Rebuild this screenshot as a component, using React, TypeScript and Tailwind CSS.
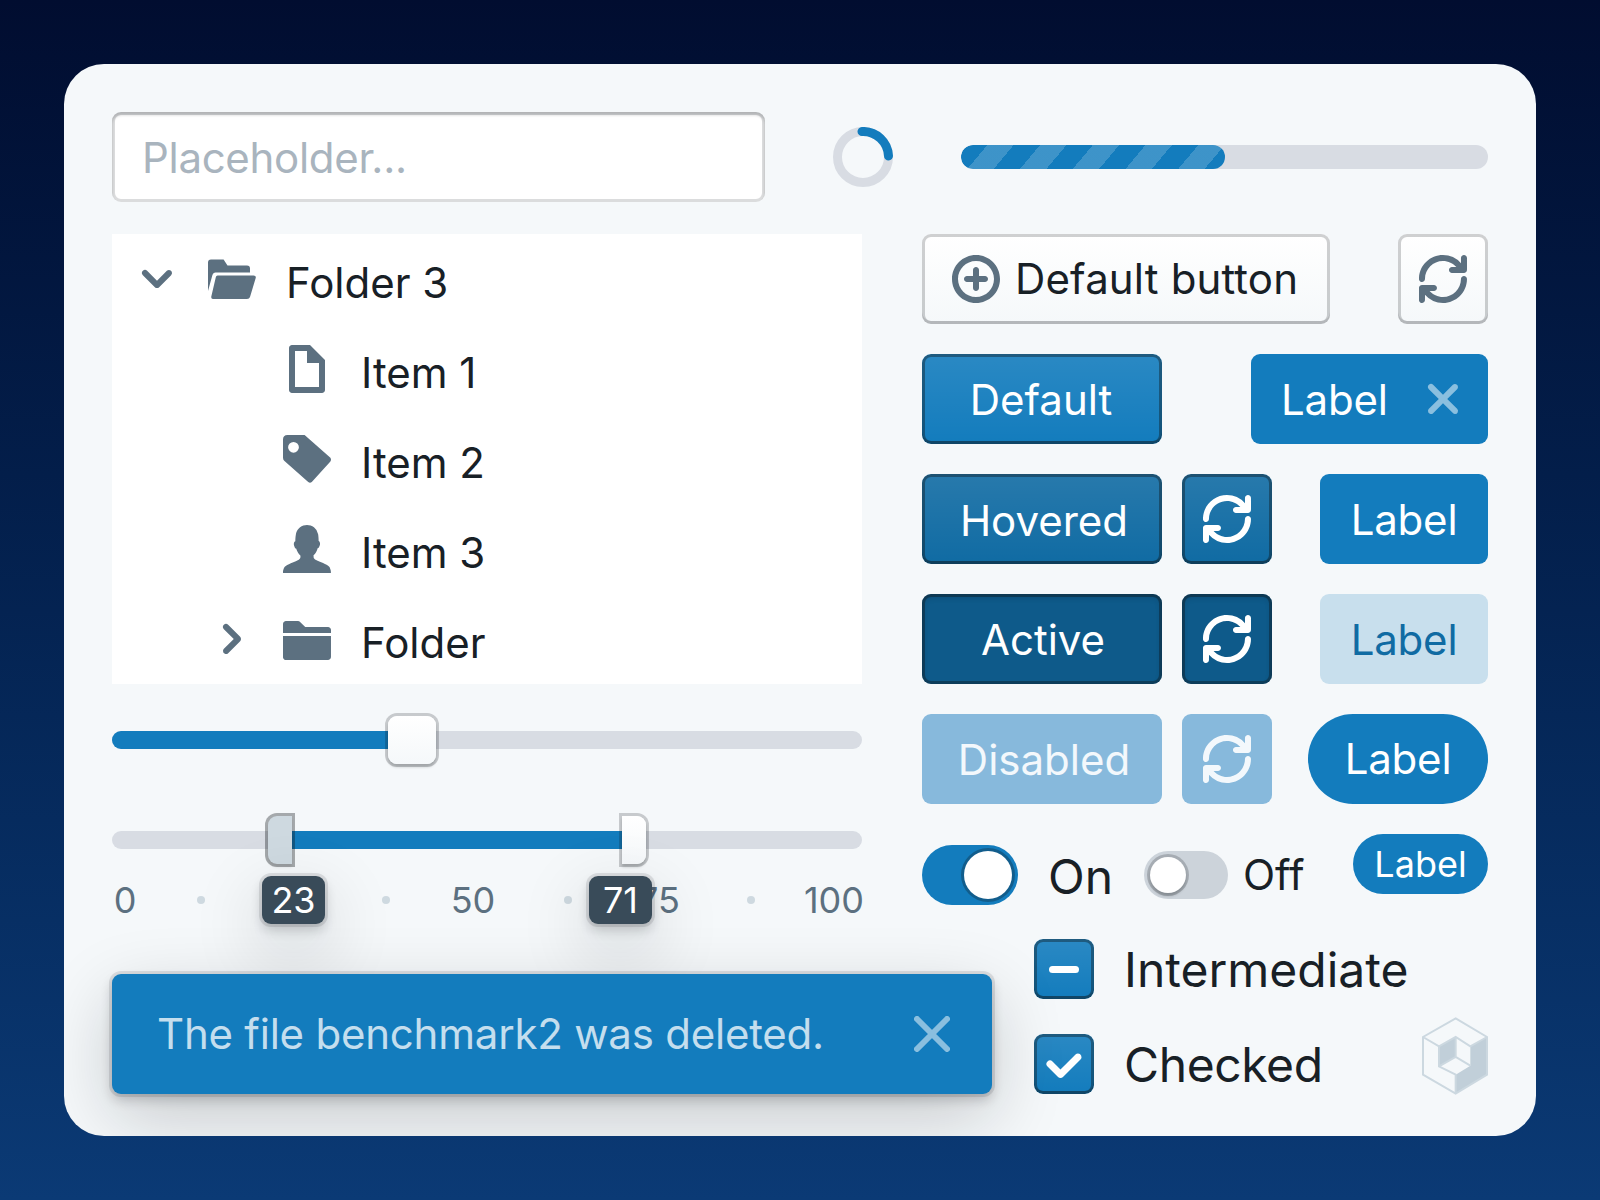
const refreshPath = "M14.99 6.99c-.55 0-1 .45-1 1 0 3.31-2.69 6-6 6-1.77 0-3.36-.78-4.46-2h1.46c.55 0 1-.45 1-1s-.45-1-1-1h-4c-.55 0-1 .45-1 1v4c0 .55.45 1 1 1s1-.45 1-1v-1.72A7.97 7.97 0 007.99 16c4.42 0 8-3.58 8-8 0-.55-.45-1.01-1-1.01zm0-6.99c-.55 0-1 .45-1 1v1.72A7.97 7.97 0 007.99 0c-4.42 0-8 3.58-8 8 0 .55.45 1 1 1s1-.45 1-1c0-3.31 2.69-6 6-6 1.77 0 3.36.78 4.46 2h-1.46c-.55 0-1 .45-1 1s.45 1 1 1h4c.55 0 1-.45 1-1V1c0-.55-.45-1-1-1z";
const addPath = "M8 0C3.58 0 0 3.58 0 8s3.58 8 8 8 8-3.58 8-8-3.58-8-8-8zm0 14c-3.31 0-6-2.69-6-6s2.69-6 6-6 6 2.69 6 6-2.69 6-6 6zm3-7H9V5c0-.55-.45-1-1-1s-1 .45-1 1v2H5c-.55 0-1 .45-1 1s.45 1 1 1h2v2c0 .55.45 1 1 1s1-.45 1-1V9h2c.55 0 1-.45 1-1s-.45-1-1-1z";
const crossPath = "M9.41 8l3.29-3.29c.19-.18.3-.43.3-.71a1.003 1.003 0 00-1.71-.71L8 6.59l-3.29-3.3a1.003 1.003 0 00-1.42 1.42L6.59 8 3.3 11.29c-.19.18-.3.43-.3.71a1.003 1.003 0 001.71.71L8 9.41l3.29 3.29c.18.19.43.3.71.3a1.003 1.003 0 00.71-1.71L9.41 8z";
const chevronDown = "M12 5c-.28 0-.53.11-.71.29L8 8.59l-3.29-3.3a1.003 1.003 0 00-1.42 1.42l4 4c.18.18.43.29.71.29s.53-.11.71-.29l4-4A1.003 1.003 0 0012 5z";
const chevronRight = "M10.71 7.29l-4-4a1.003 1.003 0 00-1.42 1.42L8.59 8 5.3 11.29c-.19.18-.3.43-.3.71a1.003 1.003 0 001.71.71l4-4c.18-.18.29-.43.29-.71 0-.28-.11-.53-.29-.71z";
const folderOpen = "M1 1.5H5.2L6.5 3.5H13Q14 3.5 14 4.5V5.8H2.5Q1.8 5.8 1.5 6.6L0 12V2.5Q0 1.5 1 1.5ZM3.2 6.8H15.2Q16.1 6.8 15.9 7.7L14 14Q13.8 14.7 13 14.7H1.9Q.9 14.7 1.1 13.8L2.6 7.4Q2.7 6.8 3.2 6.8Z";
const folderClose = "M-.01 14c0 .55.45 1 1 1h14c.55 0 1-.45 1-1V7h-16v7zm15-10H7.41L5.7 2.3A.965.965 0 005 2H1C.45 2 0 2.45 0 3v3h16V5c0-.55-.45-1-1-1z";
const documentPath = "M9 0H3c-.55 0-1 .45-1 1v14c0 .55.45 1 1 1h10c.55 0 1-.45 1-1V5L9 0zm3 14H4V2h4v4h4v8z";
const tagPath = "M1.5 0H7.2L15.8 7.6Q16.2 8.2 15.8 8.8L9.6 15.7Q9 16.2 8.4 15.7L.4 8.6Q0 8.2 0 7.6V1.5Q0 0 1.5 0ZM3.5 2.3a1.8 1.8 0 1 0 0 3.6a1.8 1.8 0 1 0 0-3.6Z";
const personPath = "M15.68 14.32c-.46-1.05-2.68-1.75-4.16-2.4-1.48-.65-1.28-1.05-1.33-1.59-.01-.07-.01-.15-.01-.23.51-.45.92-1.07 1.19-1.78 0 0 .01-.04.02-.05.06-.15.11-.32.15-.48.34-.07.54-.44.61-.78.08-.14.23-.48.2-.87-.05-.5-.25-.73-.47-.82v-.09c0-.63-.06-1.55-.17-2.15A3.671 3.671 0 0010.32.76C9.68.28 8.79 0 8 0s-1.68.28-2.31.76c-.61.46-1.06 1.13-1.28 1.86-.06.2-.1.39-.13.59-.11.6-.17 1.52-.17 2.15v.08c-.24.09-.45.32-.5.83-.03.38.13.72.2.86.08.35.28.72.63.78.04.17.09.33.15.49 0 .01.01.02.01.03l.01.01c.27.72.7 1.35 1.22 1.8 0 .07-.01.14-.01.21-.05.54.1.94-1.37 1.59-1.48.65-3.7 1.35-4.16 2.4-.46 1.05-.27 1.67-.27 1.67h15.92c-.01.01.18-.61-.28-1.66z";
const tickPath = "M12 5c-.28 0-.53.11-.71.29L7 9.59l-2.29-2.3a1.003 1.003 0 00-1.42 1.42l3 3c.18.18.43.29.71.29s.53-.11.71-.29l5-5A1.003 1.003 0 0012 5z";

function Icon(props: { d: string; size?: number; className?: string }) {
  const size = props.size || 48;
  return (
    <svg width={size} height={size} viewBox="0 0 16 16" className={"shrink-0 fill-current " + (props.className || "")}>
      <path d={props.d} fillRule="evenodd" />
    </svg>
  );
}

const primaryShadow = "shadow-[inset_0_0_0_3px_rgba(16,22,26,.4),inset_0_-3px_0_rgba(16,22,26,.2)] bg-gradient-to-b from-white/10 to-white/0";
const btnBase = "h-[90px] flex items-center justify-center rounded-[9px] text-white";

function PrimaryBtn(props: { label: string; kind: string }) {
  let look = "bg-[#137cbd] pr-[2px] pt-[2px] " + primaryShadow;
  if (props.kind === "hover") look = "bg-[#106ba3] pl-[4px] pt-[4px] " + primaryShadow;
  if (props.kind === "active") look = "bg-[#0e5a8a] pl-[2px] pt-[2px] shadow-[inset_0_0_0_3px_rgba(16,22,26,.4),inset_0_3px_6px_rgba(16,22,26,.2)]";
  if (props.kind === "disabled") look = "bg-[#87b9dc] pl-[4px] pt-[2px] text-white/90";
  return <div className={btnBase + " w-[240px] " + look}>{props.label}</div>;
}

function RefreshBtn(props: { kind: string }) {
  let look = "bg-[#106ba3] " + primaryShadow;
  if (props.kind === "active") look = "bg-[#0e5a8a] shadow-[inset_0_0_0_3px_rgba(16,22,26,.4),inset_0_3px_6px_rgba(16,22,26,.2)]";
  if (props.kind === "disabled") look = "bg-[#87b9dc] text-white/90";
  return (
    <div className={btnBase + " w-[90px] ml-[20px] " + look}>
      <Icon d={refreshPath} />
    </div>
  );
}

function TreeRow(props: { depth: number; caret?: string; icon: string; label: string }) {
  return (
    <div className={"flex items-center h-[90px] " + (props.depth ? "pl-[96px]" : "pl-[21px]")}>
      <div className="w-[48px] h-[48px]">
        {props.caret && <Icon d={props.caret} className="text-[#5c7080]" />}
      </div>
      <Icon d={props.icon} className="ml-[27px] text-[#5c7080]" />
      <span className="ml-[30px] mt-[8px] text-[#182026]">{props.label}</span>
    </div>
  );
}

const handleLook = "bg-gradient-to-b from-white to-[#f5f8fa] shadow-[0_0_0_3px_rgba(16,22,26,.2),0_3px_3px_rgba(16,22,26,.2)]";
const tipLook = "absolute top-[27px] w-[63px] h-[48px] flex items-center justify-center rounded-[9px] bg-[#394b59] text-white text-[36px] shadow-[0_0_0_3px_rgba(16,22,26,.1),0_6px_12px_rgba(16,22,26,.2),0_24px_72px_rgba(16,22,26,.2)]";
const tickLook = "absolute top-[27px] w-[60px] h-[48px] flex items-center justify-center text-[36px] text-[#5c7080]";
const dotLook = "absolute top-[47px] w-[8px] h-[8px] rounded-full bg-[#ced9e0]";

function RangeLabels() {
  return (
    <div className="relative h-[125px]">
      <span className={tickLook + " left-[-17px]"}>0</span>
      <span className={dotLook + " left-[85px]"} />
      <span className={dotLook + " left-[270px]"} />
      <span className={tickLook + " left-[331px]"}>50</span>
      <span className={dotLook + " left-[452px]"} />
      <span className={tickLook + " left-[517px]"}>75</span>
      <span className={dotLook + " left-[635px]"} />
      <span className={tickLook + " left-[692px]"}>100</span>
      <span className={tipLook + " left-[150px]"}>23</span>
      <span className={tipLook + " left-[477px]"}>71</span>
    </div>
  );
}

function Logo() {
  return (
    <svg width="66" height="78" viewBox="67 52 198 234" className="shrink-0 mb-[-1px]">
      <path d="M262 112L262 225L168 282L168 225L212 198L212 140ZM118 140L168 112L168 172L118 200Z" fill="#c1cfd9" />
      <path
        d="M168 56L262 112L262 225L168 282L70 225L70 112ZM70 112L118 140L168 112L212 140L262 112M118 140L118 200L168 225L168 282M118 200L168 172L212 198M168 112L168 172"
        fill="none"
        stroke="#ccd8e0"
        strokeWidth="6"
      />
    </svg>
  );
}

export default function App() {
  return (
    <div className="min-h-[1200px] p-16 bg-gradient-to-b from-[#010d30] to-[#0b3a75] font-['Inter',sans-serif] text-[42px] leading-[48px]">
      <div className="h-[1072px] p-12 rounded-[40px] bg-[#f5f8fa] overflow-hidden">
        {/* top row */}
        <div className="flex items-center h-[90px]">
          <input
            placeholder="Placeholder..."
            className="w-[653px] h-[90px] pl-[30px] pr-[27px] tracking-[-0.3px] rounded-[9px] bg-white outline-none placeholder:text-[#a9b4be] shadow-[inset_0_0_0_3px_rgba(16,22,26,.15),inset_0_3px_3px_rgba(16,22,26,.2)]"
          />
          <svg width="60" height="60" viewBox="0 0 60 60" className="ml-[68px] shrink-0 fill-none">
            <circle cx="30" cy="30" r="25.5" stroke="#d8dce3" strokeWidth="9" />
            <path d="M29 4.5A25.5 25.5 0 0 1 55.5 29" stroke="#137cbd" strokeWidth="9" strokeLinecap="round" />
          </svg>
          <div className="ml-[68px] flex-1 h-[24px] rounded-full bg-[#d8dce3] overflow-hidden">
            <div className="w-1/2 h-full rounded-full bg-[#137cbd] bg-[repeating-linear-gradient(130deg,transparent_0,transparent_20.2px,rgba(255,255,255,.18)_20.2px,rgba(255,255,255,.18)_40.4px)]" />
          </div>
        </div>

        <div className="flex gap-[60px] mt-[32px]">
          {/* left column */}
          <div className="w-[750px] shrink-0">
            <div className="bg-white">
              <TreeRow depth={0} caret={chevronDown} icon={folderOpen} label="Folder 3" />
              <TreeRow depth={1} icon={documentPath} label="Item 1" />
              <TreeRow depth={1} icon={tagPath} label="Item 2" />
              <TreeRow depth={1} icon={personPath} label="Item 3" />
              <TreeRow depth={1} caret={chevronRight} icon={folderClose} label="Folder" />
            </div>

            <div className="relative h-[18px] mt-[47px] rounded-full bg-[#d8dce3]">
              <div className="absolute left-0 top-0 h-full w-[280px] rounded-l-full bg-[#137cbd]" />
              <div className={"absolute left-[276px] top-[-15px] w-[48px] h-[48px] rounded-[9px] " + handleLook} />
            </div>

            <div className="relative h-[18px] mt-[82px] rounded-full bg-[#d8dce3]">
              <div className="absolute left-[179px] top-0 h-full w-[331px] bg-[#137cbd]" />
              <div className="absolute left-[156px] top-[-15px] w-[24px] h-[48px] rounded-l-[9px] bg-[#ced9e0] shadow-[0_0_0_3px_rgba(16,22,26,.35),0_3px_3px_rgba(16,22,26,.1)]" />
              <div className={"absolute left-[510px] top-[-15px] w-[24px] h-[48px] rounded-r-[9px] " + handleLook} />
            </div>

            <RangeLabels />

            <div className="relative z-10 w-[880px] h-[120px] flex items-center justify-between pl-[45px] pr-[42px] rounded-[9px] bg-[#137cbd] text-white/75 shadow-[0_0_0_3px_rgba(16,22,26,.1),0_6px_12px_rgba(16,22,26,.2),0_24px_72px_rgba(16,22,26,.2)]">
              <span className="tracking-[-0.22px]">The file benchmark2 was deleted.</span>
              <svg width="36" height="36" viewBox="0 0 36 36" className="shrink-0">
                <path d="M3 3L33 33M33 3L3 33" stroke="#8abfdf" strokeWidth="6" strokeLinecap="round" />
              </svg>
            </div>
          </div>

          {/* right column */}
          <div className="flex-1 flex flex-col gap-[30px]">
            <div className="flex justify-between">
              <div className="w-[408px] h-[90px] flex items-center pl-[30px] rounded-[9px] text-[#182026] bg-gradient-to-b from-white to-[#f5f8fa] shadow-[inset_0_0_0_3px_rgba(16,22,26,.2),inset_0_-3px_0_rgba(16,22,26,.1)]">
                <Icon d={addPath} className="text-[#5c7080]" />
                <span className="ml-[15px] tracking-[0.15px]">Default button</span>
              </div>
              <div className="w-[90px] h-[90px] flex items-center justify-center rounded-[9px] text-[#5c7080] bg-gradient-to-b from-white to-[#f5f8fa] shadow-[inset_0_0_0_3px_rgba(16,22,26,.2),inset_0_-3px_0_rgba(16,22,26,.1)]">
                <Icon d={refreshPath} />
              </div>
            </div>

            <div className="flex justify-between">
              <PrimaryBtn label="Default" kind="default" />
              <div className="w-[237px] h-[90px] flex items-center justify-between pl-[30px] pr-[21px] rounded-[9px] bg-[#137cbd] text-white">
                <span className="mt-[2px] tracking-[-0.2px]">Label</span>
                <Icon d={crossPath} className="text-[#8abfdf]" />
              </div>
            </div>

            <div className="flex">
              <PrimaryBtn label="Hovered" kind="hover" />
              <RefreshBtn kind="hover" />
              <div className="ml-auto w-[168px] h-[90px] flex items-center justify-center pt-[2px] tracking-[-0.2px] rounded-[9px] bg-[#137cbd] text-white">Label</div>
            </div>

            <div className="flex">
              <PrimaryBtn label="Active" kind="active" />
              <RefreshBtn kind="active" />
              <div className="ml-auto w-[168px] h-[90px] flex items-center justify-center pt-[2px] tracking-[-0.2px] rounded-[9px] bg-[#c8dfed] text-[#106ba3]">Label</div>
            </div>

            <div className="flex">
              <PrimaryBtn label="Disabled" kind="disabled" />
              <RefreshBtn kind="disabled" />
              <div className="ml-auto w-[180px] h-[90px] flex items-center justify-center tracking-[-0.2px] rounded-full bg-[#137cbd] text-white">Label</div>
            </div>

            <div className="flex">
              <div className="flex items-center h-[60px] mt-[11px]">
                <div className="w-[96px] h-[60px] flex items-center justify-end pr-[6px] rounded-full bg-[#137cbd]">
                  <div className="w-[48px] h-[48px] rounded-full bg-white shadow-[0_0_0_3px_rgba(16,22,26,.3)]" />
                </div>
                <span className="w-[96px] ml-[30px] mt-[4px] text-[48px] text-[#182026]">On</span>
                <div className="w-[84px] h-[48px] flex items-center pl-[6px] rounded-full bg-[#ccd3da]">
                  <div className="w-[36px] h-[36px] rounded-full bg-white shadow-[0_0_0_3px_rgba(16,22,26,.2),0_3px_3px_rgba(16,22,26,.2)]" />
                </div>
                <span className="ml-[15px] text-[#182026]">Off</span>
              </div>
              <div className="ml-auto w-[135px] h-[60px] flex items-center justify-center rounded-full bg-[#137cbd] text-white text-[36px]">Label</div>
            </div>

            <div className="flex items-end justify-between pl-[112px] mt-[4px]">
              <div className="flex flex-col gap-[35px] text-[48px] text-[#182026]">
                <div className="flex items-center">
                  <div className={"w-[60px] h-[60px] flex items-center justify-center rounded-[9px] bg-[#137cbd] " + primaryShadow}>
                    <div className="w-[30px] h-[7px] rounded-full bg-white" />
                  </div>
                  <span className="ml-[30px] mt-[2px]">Intermediate</span>
                </div>
                <div className="flex items-center">
                  <div className={"w-[60px] h-[60px] flex items-center justify-center rounded-[9px] bg-[#137cbd] text-white " + primaryShadow}>
                    <Icon d={tickPath} size={56} />
                  </div>
                  <span className="ml-[30px] mt-[2px] tracking-[-0.4px]">Checked</span>
                </div>
              </div>
              <Logo />
            </div>
          </div>
        </div>
      </div>
    </div>
  );
}
